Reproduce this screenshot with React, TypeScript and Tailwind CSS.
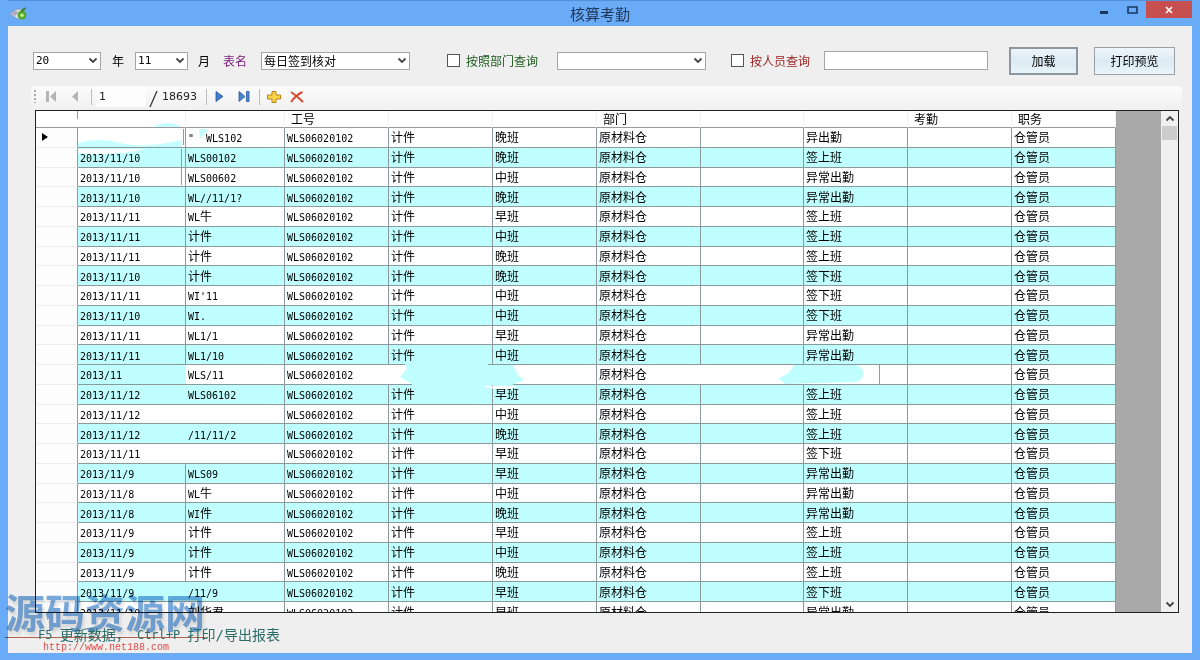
import React from 'react';

const YAHEI = "font-['Noto_Sans_CJK_SC',sans-serif]";

type Row = {
  date: string;
  code: string;
  kind: string;
  shift: string;
  status: string;
  open?: boolean;
};

const row = (date: string, code: string, shift: string, status: string, extra: Partial<Row> = {}): Row => ({
  date,
  code,
  kind: '计件',
  shift,
  status,
  ...extra,
});

const rows: Row[] = [
  row('', '"  WLS102', '晚班', '异出勤'),
  row('2013/11/10', 'WLS00102', '晚班', '签上班'),
  row('2013/11/10', 'WLS00602', '中班', '异常出勤'),
  row('2013/11/10', 'WL//11/1?', '晚班', '异常出勤'),
  row('2013/11/11', 'WL牛', '早班', '签上班'),
  row('2013/11/11', '计件', '中班', '签上班'),
  row('2013/11/11', '计件', '晚班', '签上班'),
  row('2013/11/10', '计件', '晚班', '签下班'),
  row('2013/11/11', "WI'11", '中班', '签下班'),
  row('2013/11/10', 'WI.', '中班', '签下班'),
  row('2013/11/11', 'WL1/1', '早班', '异常出勤'),
  row('2013/11/11', 'WL1/10', '中班', '异常出勤'),
  row('2013/11', 'WLS/11', '', '', { kind: '', open: true }),
  row('2013/11/12', 'WLS06102', '早班', '签上班', { open: true }),
  row('2013/11/12', '', '中班', '签上班', { open: true }),
  row('2013/11/12', '/11/11/2', '晚班', '签上班', { open: true }),
  row('2013/11/11', '', '早班', '签下班', { open: true }),
  row('2013/11/9', 'WLS09', '早班', '异常出勤'),
  row('2013/11/8', 'WL牛', '中班', '异常出勤'),
  row('2013/11/8', 'WI件', '晚班', '异常出勤'),
  row('2013/11/9', '计件', '早班', '签上班'),
  row('2013/11/9', '计件', '中班', '签上班'),
  row('2013/11/9', '计件', '晚班', '签上班'),
  row('2013/11/9', '/11/9', '早班', '签下班', { open: true }),
  row('2013/11/10', '刘华君', '早班', '异常出勤', { open: true }),
];

const MONO = "font-['DejaVu_Sans_Mono','Noto_Sans_CJK_SC',monospace]";

function Cell({ text, line = true, fill = '' }: { text: string; line?: boolean; fill?: string }) {
  const parts = text.split(/([\u4e00-\u9fff]+)/).filter(Boolean);
  return (
    <td
      className={`overflow-hidden border-b border-[#8a9a9a] py-0 pr-0 pl-[2px] align-middle text-[12px] leading-4 whitespace-pre ${
        line ? 'border-r' : ''
      } ${fill}`}
    >
      {parts.map((p, i) =>
        /[\u4e00-\u9fff]/.test(p) ? (
          <span key={i}>{p}</span>
        ) : (
          <span key={i} className={`text-[10px] leading-3 ${MONO}`}>{p}</span>
        ),
      )}
    </td>
  );
}

function Chevron({ up = false }: { up?: boolean }) {
  return (
    <svg width="10" height="7" viewBox="0 0 10 7" className={up ? 'rotate-180' : ''} aria-hidden="true">
      <path d="M1.5 1.5 5 5 8.5 1.5" fill="none" stroke="#444" strokeWidth="1.8" />
    </svg>
  );
}

function Combo({ label, value, width, mono = false }: { label: string; value: string; width: string; mono?: boolean }) {
  return (
    <div className={`relative h-[18px] shrink-0 ${width}`}>
      <select
        aria-label={label}
        defaultValue={value}
        className={`block h-full w-full appearance-none border border-[#a5a5a5] bg-white pl-[2px] leading-4 text-black ${
          mono ? `text-[11px] ${MONO}` : 'text-[12px]'
        }`}
      >
        <option value={value}>{value}</option>
      </select>
      <span className="pointer-events-none absolute inset-y-0 right-[3px] flex items-center">
        <Chevron />
      </span>
    </div>
  );
}

function Separator() {
  return <span className="h-4 w-px bg-[#bdbdbd]" />;
}

function TitleBar() {
  return (
    <header className="grid h-[26px] shrink-0 grid-cols-[1fr_auto_1fr] items-center border-t border-[#5590d8]">
      <div className="pl-[2px]">
        <svg width="18" height="14" viewBox="0 0 18 14" aria-hidden="true">
          <path d="M0 7 6 2.5 12 2 14 10 8 12Z" fill="#dfe6ea" stroke="#8796a8" strokeWidth=".7" />
          <path d="M1 7 6 3 8 6 5 9Z" fill="#b8a8c0" />
          <circle cx="12" cy="8" r="4.5" fill="#58a92f" />
          <circle cx="12" cy="8.3" r="1.7" fill="#c9ee9b" />
          <path d="M11 4.5 15.5 1" stroke="#3f7c25" strokeWidth="1.8" />
        </svg>
      </div>
      <h1 className="text-[15px] leading-5 text-[#1f3757]">核算考勤</h1>
      <div className="flex items-start justify-end self-stretch">
        <button aria-label="最小化" className="flex h-[18px] w-7 items-center justify-center">
          <svg width="10" height="12" aria-hidden="true"><path d="M1 7h8v3H1z" fill="#17375f" /></svg>
        </button>
        <button aria-label="最大化" className="flex h-[18px] w-7 items-center justify-center">
          <svg width="11" height="8" aria-hidden="true">
            <path d="M1 1h9v6H1z" fill="none" stroke="#17375f" strokeWidth="1.6" />
          </svg>
        </button>
        <button aria-label="关闭" className="flex h-[17px] w-[46px] items-center justify-center bg-[#c84f50]">
          <svg width="8" height="8" aria-hidden="true">
            <path d="M1 1 7 7M7 1 1 7" stroke="#fff" strokeWidth="1.7" />
          </svg>
        </button>
      </div>
    </header>
  );
}

function Filters() {
  return (
    <form className="flex h-[60px] shrink-0 items-center pt-[9px] pr-[17px] pl-[25px] text-[12px] leading-4" onSubmit={(e) => e.preventDefault()}>
      <Combo label="年" value="20" width="w-[68px]" mono />
      <span className="ml-[11px]">年</span>
      <span className="ml-[11px] flex">
        <Combo label="月" value="11" width="w-[53px]" mono />
      </span>
      <span className="ml-[10px]">月</span>
      <span className="ml-[13px] text-[#7a1a7d]">表名</span>
      <span className="ml-[14px] flex">
        <Combo label="表名" value="每日签到核对" width="w-[149px]" />
      </span>
      <label className="ml-[37px] flex items-center gap-[6px] text-[#1d5a1d]">
        <input type="checkbox" className="h-[13px] w-[13px] appearance-none border border-[#555] bg-white" />
        按照部门查询
      </label>
      <span className="ml-[19px] flex">
        <Combo label="部门" value="" width="w-[149px]" />
      </span>
      <label className="ml-[25px] flex items-center gap-[6px] text-[#9b1c1c]">
        <input type="checkbox" className="h-[13px] w-[13px] appearance-none border border-[#555] bg-white" />
        按人员查询
      </label>
      <input aria-label="人员" className="ml-[14px] h-[19px] w-[164px] border border-[#a5a5a5] bg-white px-1" />
      <div className="ml-auto flex items-center gap-4">
        <button className="h-7 w-[69px] border-2 border-[#8d979f] bg-linear-to-b from-[#ecf4f9] via-[#dceaf4] to-[#e6f3fa]">加载</button>
        <button className="h-7 w-[81px] border border-[#98a0a8] bg-linear-to-b from-[#eff5fa] via-[#dceaf4] to-[#eaf5fb]">打印预览</button>
      </div>
    </form>
  );
}

function Navigator() {
  return (
    <div className="mr-[10px] ml-[23px] flex h-6 shrink-0 items-center rounded-sm bg-linear-to-b from-[#fcfcfc] to-[#f0f0f0] pb-[3px] pl-[3px] text-[#222]">
      <svg width="3" height="13" aria-hidden="true">
        <path d="M1 0V13" stroke="#aaa" strokeWidth="2" strokeDasharray="2 2" />
      </svg>
      <button aria-label="第一条" className="ml-[8px]">
        <svg width="12" height="11" className="block" aria-hidden="true">
          <path d="M1 0h3v11H1zM11 0v11L5 5.500z" fill="#b4b4b4" />
        </svg>
      </button>
      <button aria-label="上一条" className="mr-[12px] ml-[14px]">
        <svg width="8" height="11" className="block" aria-hidden="true"><path d="M7 0v11L1 5.500z" fill="#b4b4b4" /></svg>
      </button>
      <Separator />
      <input
        aria-label="当前位置"
        defaultValue="1"
        className="ml-[4px] h-5 w-[50px] bg-[#fdfdfd] px-[3px] font-['DejaVu_Sans',sans-serif] text-[11px]"
      />
      <span className="ml-[4px] flex items-center gap-[4px] font-['DejaVu_Sans',sans-serif] text-[11px] leading-4">
        <svg width="8" height="20" className="overflow-visible" aria-hidden="true">
          <path d="M0 20 7 4" stroke="#333" strokeWidth="1.300" />
        </svg>
        18693
      </span>
      <span className="ml-[9px] flex"><Separator /></span>
      <button aria-label="下一条" className="ml-[8px]">
        <svg width="9" height="11" className="block" aria-hidden="true"><path d="M1 .5 8 5.500 1 10.500z" fill="#3f7fcb" stroke="#28599c" strokeWidth=".8" /></svg>
      </button>
      <button aria-label="最后一条" className="mr-[9px] ml-[14px]">
        <svg width="12" height="11" className="block" aria-hidden="true">
          <path d="M1 .5 7 5.500 1 10.500zM8.500 .5h2.500v10H8.500z" fill="#4a86cc" stroke="#28599c" strokeWidth=".8" />
        </svg>
      </button>
      <Separator />
      <button aria-label="新添" className="ml-[7px]">
        <svg width="14" height="12" className="block" aria-hidden="true">
          <path d="M5 .5h4V4h4.500v4H9v3.500H5V8H.5V4H5z" fill="#f8d548" stroke="#b78318" />
        </svg>
      </button>
      <button aria-label="删除" className="ml-[9px]">
        <svg width="14" height="12" className="block" aria-hidden="true">
          <path d="M1 1Q7 5 13 11M12.500 1Q6 4 1 11" fill="none" stroke="#dc4a34" strokeWidth="2" />
        </svg>
      </button>
    </div>
  );
}

const headers = ['', '', '工号', '', '', '部门', '', '', '考勤', '职务'];

function DataGrid() {
  return (
    <div className="relative mr-[13px] ml-[27px] flex min-h-0 flex-1 overflow-hidden border border-[#222] bg-[#a9a9a9]">
      <table className="h-[511px] w-[1080px] shrink-0 table-fixed border-separate border-spacing-0 self-start bg-white text-left text-black">
        <colgroup>
          <col className="w-[42px]" />
          <col className="w-[108px]" />
          <col className="w-[99px]" />
          <col className="w-[104px]" />
          <col className="w-[104px]" />
          <col className="w-[104px]" />
          <col className="w-[104px]" />
          <col className="w-[103px]" />
          <col className="w-[104px]" />
          <col className="w-[104px]" />
          <col className="w-[104px]" />
        </colgroup>
        <thead>
          <tr className="h-[17px]">
            <th className="border-b border-[#999] p-0" />
            {headers.map((h, i) => (
              <th key={i} className="h-[17px] border-r border-b border-r-[#f0f0f0] border-b-[#999] py-0 pr-0 pl-[6px] text-[12px] leading-4 font-normal">
                {h}
              </th>
            ))}
          </tr>
        </thead>
        <tbody>
          {rows.map((r, i) => (
            <tr key={i} className={i % 2 ? 'bg-[#bfffff]' : 'bg-white'}>
              <td className="border-r border-b border-r-[#999] border-b-[#ececf0] bg-[#fdfdfd] p-0 pl-[6px]">
                {i === 0 && (
                  <svg width="6" height="8" className="block" aria-hidden="true"><path d="M0 0 6 4 0 8z" fill="#000" /></svg>
                )}
              </td>
              <Cell text={r.date} line={!r.open} fill={i === 12 ? 'bg-[#bfffff]' : ''} />
              <Cell text={r.code} />
              <Cell text="WLS06020102" line={i !== 12} />
              <Cell text={r.kind} line={i !== 12} />
              <Cell text={r.shift} />
              <Cell text="原材料仓" line={i !== 12} />
              <Cell text="" line={i !== 12} />
              <Cell text={r.status} />
              <Cell text="" />
              <Cell text="仓管员" />
            </tr>
          ))}
        </tbody>
      </table>
      <svg className="pointer-events-none absolute top-0 left-0" width="1080" height="500" aria-hidden="true">
        <path d="M41.500 0v8" stroke="#999" />
        <path d="M42 32q20-6 42 0t62-3v7H42z" fill="#c5ffff" />
        <path d="M118 15q16-6 26 0v1h-26z" fill="#c5ffff" />
        <path d="M42 38h66q-25 7-66 4z" fill="#fff" />
        <path d="M147.500 18v16M145.500 38v36" stroke="#999" />
        <path d="M163 18h10l-9 10z" fill="#c5ffff" />
        <path d="M369 253h83v1h25l5 10 6 5-12 5h-33v4h-67v-5l-12-7 7-8z" fill="#bfffff" />
        <path d="M445 275h37l-7 3h-16z" fill="#fff" />
        <path d="M742 267q12-3 16-13h62q8 2 7 10t-12 7l-66 2z" fill="#bfffff" />
        <path d="M843.500 254v19" stroke="#999" />
      </svg>
      <div className="flex-1" />
      <div className="flex w-[17px] flex-col items-center bg-[#f0f0f0]">
        <button aria-label="向上滚动" className="flex h-[15px] w-full items-center justify-center"><Chevron up /></button>
        <div className="h-[14px] w-[15px] bg-[#cdcdcd]" />
        <button aria-label="向下滚动" className="mt-auto flex h-4 w-full items-center justify-center"><Chevron /></button>
      </div>
    </div>
  );
}

export default function App() {
  return (
    <div className={`relative flex h-screen min-h-0 w-full flex-col bg-[#6aabf7] px-2 pb-[7px] ${YAHEI}`}>
      <TitleBar />
      <main className="flex min-h-0 flex-1 flex-col bg-[#efefef]">
        <Filters />
        <Navigator />
        <DataGrid />
        <footer className={`relative z-10 flex h-10 shrink-0 items-center pt-[4px] pl-[30px] text-[12px] leading-4 whitespace-pre text-[#2a6c68] ${MONO}`}>
          <span>F5 </span>
          <span className="text-[14px]">更新数据，</span>
          <span> Ctrl+P </span>
          <span className="text-[14px]">打印/导出报表</span>
        </footer>
      </main>
      <div className="pointer-events-none absolute bottom-0 left-0 mix-blend-multiply">
        <p className="pb-1 pl-[5px] text-[40px] leading-[44px] font-bold text-[#4f8fd2]/75 [text-shadow:2px_3px_3px_#9994]">源码资源网</p>
        <div className="ml-[5px] w-[200px] border-t border-[#c06a50]" />
        <p className="pt-[2px] pb-1 pl-[43px] font-['Liberation_Mono',monospace] text-[10px] leading-4 text-[#f0504a]">http://www.net188.com</p>
      </div>
    </div>
  );
}
